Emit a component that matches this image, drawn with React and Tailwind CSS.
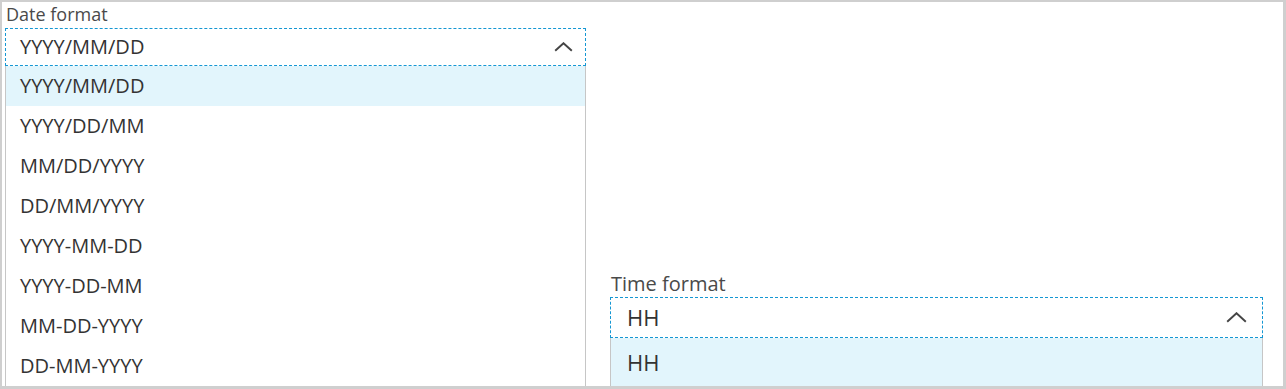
import React from "react";

const font = { fontFamily: '"Open Sans", "Noto Sans", sans-serif' };

function Chevron({ w = 19, h = 10 }) {
  return (
    <svg width={w} height={h} viewBox={`0 0 ${w} ${h}`} className="shrink-0">
      <path d={`M1.2 ${h - 1.2} L${w / 2} 1.2 L${w - 1.2} ${h - 1.2}`} fill="none" stroke="#454545" strokeWidth="1.9" />
    </svg>
  );
}

const dateItems = [
  "YYYY/MM/DD",
  "YYYY/DD/MM",
  "MM/DD/YYYY",
  "DD/MM/YYYY",
  "YYYY-MM-DD",
  "YYYY-DD-MM",
  "MM-DD-YYYY",
  "DD-MM-YYYY",
];

export default function App() {
  return (
    <div className="w-[1286px] h-[389px] bg-white overflow-hidden" style={font}>
      <div className="relative w-[1286px] h-[389px] border-l-2 border-t-2 border-r-[3px] border-b-[3px] border-[#cfcfcf] bg-white overflow-hidden flex flex-col items-start">
        {/* Date format */}
        <div className="relative ml-[3px] w-[581px] z-10">
          <div className="h-[26px] pl-[1px] text-[18px] leading-[25px] text-[#4a4a4a]">Date format</div>
          <div className="h-[38px] border border-dashed border-[#1597d3] bg-white flex items-center justify-between pl-[14px] pr-[12px] text-[20px] text-[#333]">
            <span>YYYY/MM/DD</span>
            <Chevron w={19} h={10} />
          </div>
          <div className="absolute top-full left-0 right-0 border-x border-[#c6c6c6] bg-white">
            {dateItems.map((it, i) => (
              <div
                key={it}
                className={
                  "h-[40px] flex items-center pl-[14px] text-[20px] text-[#333] " +
                  (i === 0 ? "bg-[#e2f5fc]" : "")
                }
              >
                {it}
              </div>
            ))}
          </div>
        </div>
        {/* Time format */}
        <div className="relative ml-[608px] mt-[204px] w-[653px]">
          <div className="h-[27px] pl-[1px] text-[20px] leading-[27px] text-[#4a4a4a]">Time format</div>
          <div className="h-[41px] border border-dashed border-[#1597d3] bg-white flex items-center justify-between pl-[16px] pr-[15px] text-[22px] text-[#333]">
            <span>HH</span>
            <Chevron w={21} h={11} />
          </div>
          <div className="absolute top-full left-0 right-0 border-x border-[#c6c6c6] bg-white">
            <div className="h-[48px] flex items-center pl-[16px] text-[22px] text-[#333] bg-[#e2f5fc]">HH</div>
          </div>
        </div>
      </div>
    </div>
  );
}
